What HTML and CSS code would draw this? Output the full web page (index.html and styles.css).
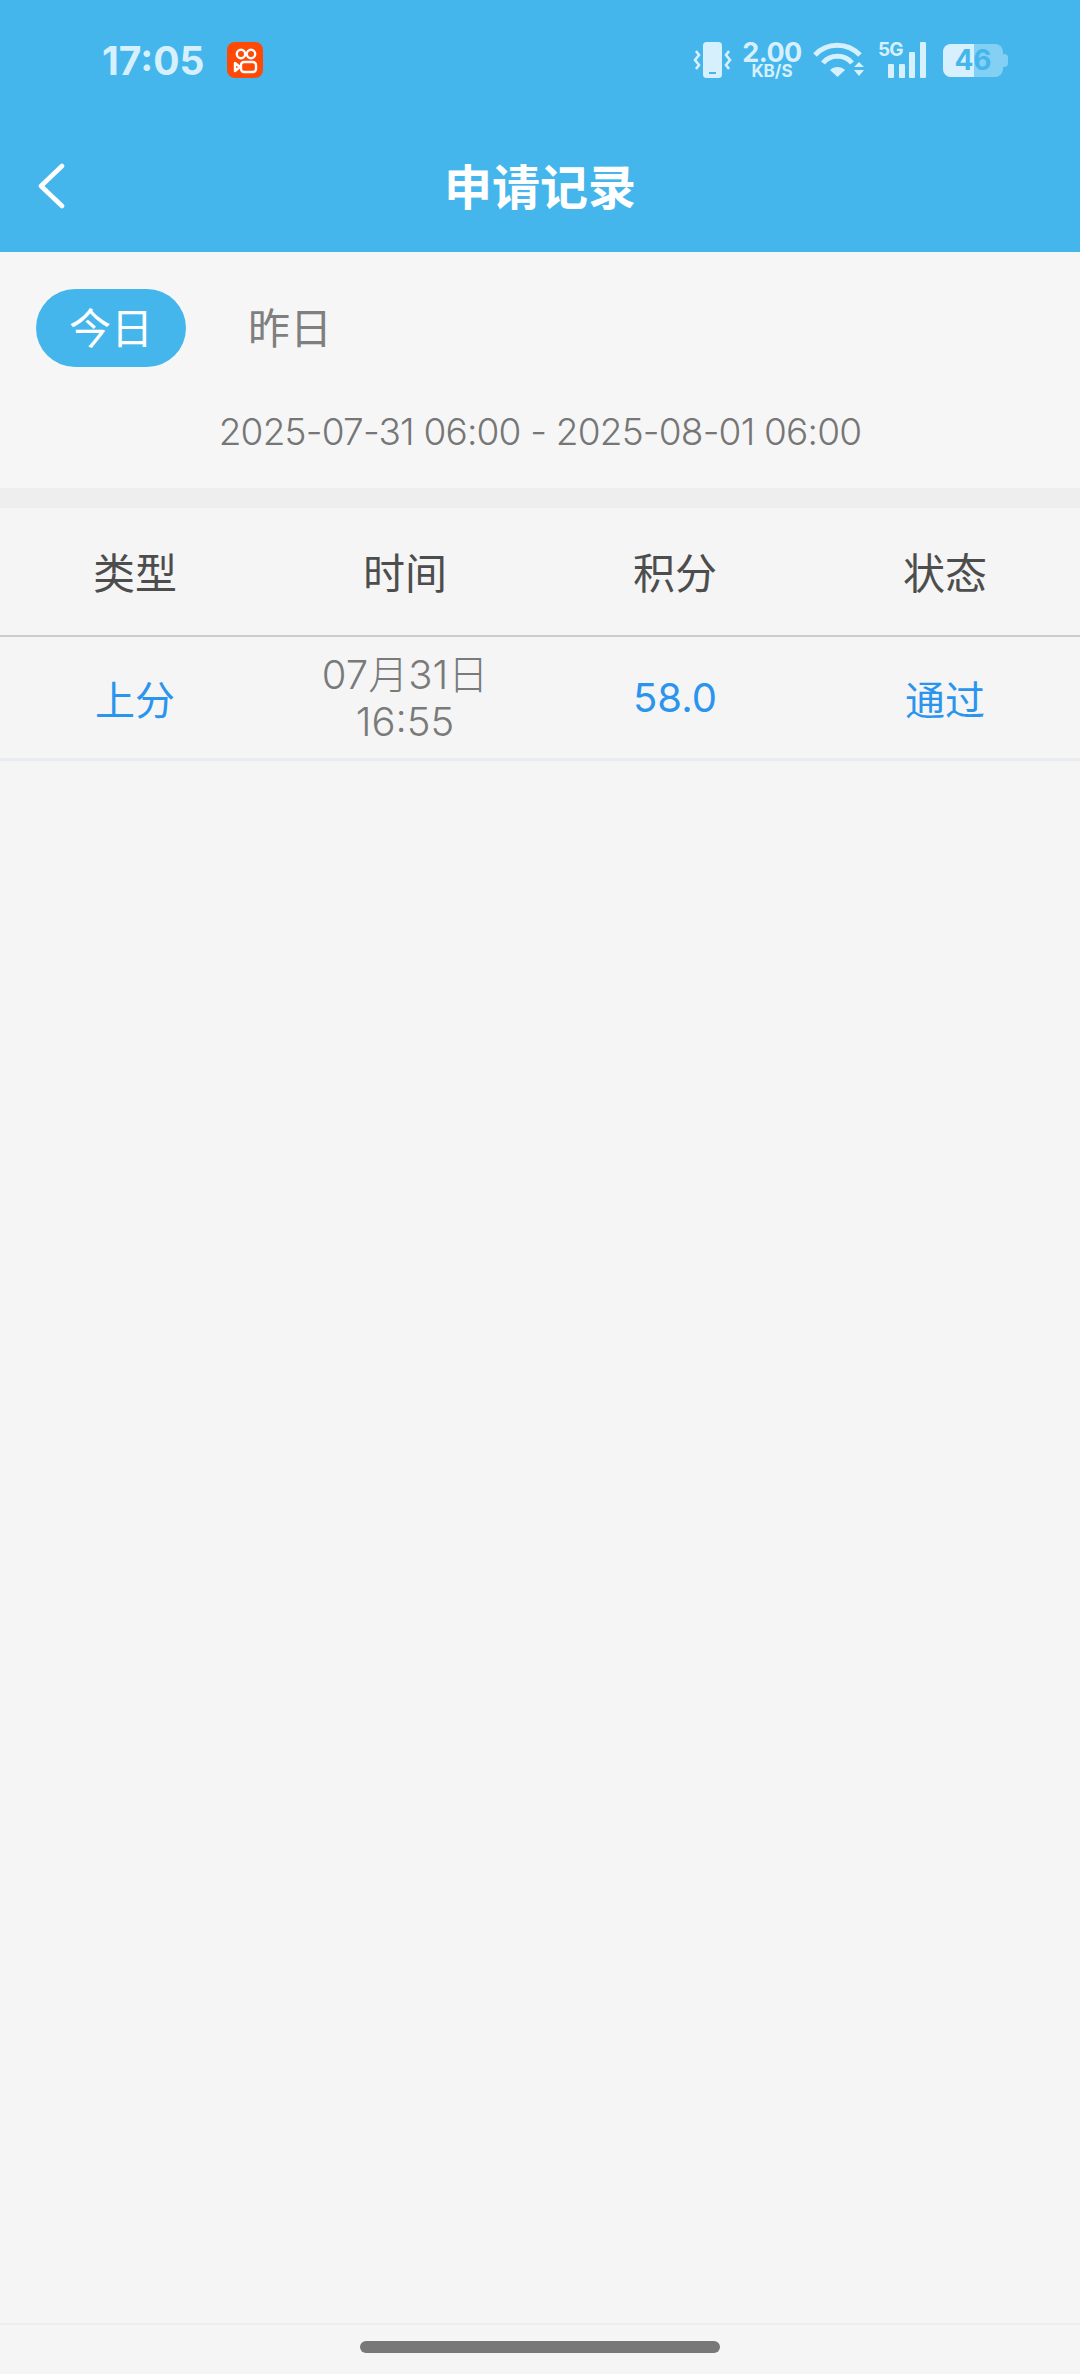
FILE: index.html
```html
<!DOCTYPE html>
<html lang="zh-CN">
<head>
  <meta charset="UTF-8" />
  <meta name="viewport" content="width=device-width, initial-scale=1.0"/>
  <title>申请记录</title>
  <link rel="stylesheet" href="styles.css">
</head>
<body>
  <div class="app">
    <header class="top">
      <div class="status">
        <span class="clock">17:05</span>
        <svg class="ks" width="36" height="36" viewBox="0 0 36 36">
          <rect width="36" height="36" rx="8" fill="#ff4906"/>
          <g fill="none" stroke="#fff" stroke-width="2.4">
            <circle cx="14" cy="12" r="4.2"/>
            <circle cx="24" cy="12" r="4.2"/>
            <rect x="14" y="20" width="15" height="10" rx="3"/>
            <path d="M8 21 L13 25 L8 29 Z" stroke-linejoin="round"/>
          </g>
        </svg>
        <div class="sys">
          <svg class="vib" width="40" height="36" viewBox="0 0 40 36">
            <rect x="10" y="0" width="19" height="36" rx="3.5" fill="#d6f0fd"/>
            <rect x="16" y="30" width="7" height="2" fill="#44b6ec"/>
            <path d="M3 9 L6 13 L2 18 L6 23 L3 27" fill="none" stroke="#d6f0fd" stroke-width="2.6"/>
            <path d="M36 9 L33 13 L37 18 L33 23 L36 27" fill="none" stroke="#d6f0fd" stroke-width="2.6"/>
          </svg>
          <div class="speed">
            <span class="speed-num">2.00</span>
            <span class="speed-unit">KB/S</span>
          </div>
          <svg class="wifi" width="52" height="36" viewBox="0 0 52 36">
            <g fill="none" stroke="#d6f0fd" stroke-width="5">
              <path d="M2 13 C14 0 34 0 47 13"/>
              <path d="M10 21 C17 12 32 12 39 21"/>
            </g>
            <path d="M17 28 C21 24 28 24 32 28 L24.5 35 Z" fill="#d6f0fd"/>
            <path d="M41 25 L46 20 L51 25 Z M41 28 L51 28 L46 34 Z" fill="#d6f0fd"/>
          </svg>
          <div class="signal">
            <span class="net">5G</span>
            <span class="bar b1"></span>
            <span class="bar b2"></span>
            <span class="bar b3"></span>
            <span class="bar b4"></span>
          </div>
          <div class="battery">
            <span class="batt-fill"></span>
            <span class="batt-num">46</span>
          </div>
        </div>
      </div>
      <div class="nav">
        <svg class="back" width="28" height="46" viewBox="0 0 28 46">
          <path d="M25 3 L4 23 L25 43" fill="none" stroke="#fff" stroke-width="4.6" stroke-linecap="round" stroke-linejoin="round"/>
        </svg>
        <h1>申请记录</h1>
      </div>
    </header>

    <section class="filter">
      <div class="tabs">
        <span class="tab active">今日</span>
        <span class="tab">昨日</span>
      </div>
      <p class="range">2025-07-31 06:00 - 2025-08-01 06:00</p>
    </section>
    <div class="band"></div>

    <div class="row head">
      <span>类型</span>
      <span>时间</span>
      <span>积分</span>
      <span>状态</span>
    </div>
    <div class="row item">
      <span class="blue">上分</span>
      <span class="when">07月31日<br>16:55</span>
      <span class="blue">58.0</span>
      <span class="blue">通过</span>
    </div>

    <div class="spacer"></div>
    <footer class="home"><span class="pill"></span></footer>
  </div>
</body>
</html>
```
FILE: styles.css
```css
* {
  box-sizing: border-box;
}
html, body {
  margin: 0;
  padding: 0;
}
body {
  font-family: Inter, "Noto Sans CJK SC", sans-serif;
  background: #f5f5f5;
}
.app {
  display: flex;
  flex-direction: column;
  height: 2374px;
}
.top {
  height: 252px;
  background: #44b6ec;
  flex: none;
}
.status {
  display: flex;
  align-items: center;
  height: 120px;
  padding: 0 72px 0 102px;
}
.clock {
  font-size: 39px;
  font-weight: 700;
  color: #d6f0fd;
  width: 125px;
}
.sys {
  margin-left: auto;
  display: flex;
  align-items: center;
}
.vib {
  margin-right: 10px;
}
.speed {
  display: flex;
  flex-direction: column;
  align-items: center;
  width: 58px;
  color: #d6f0fd;
  font-weight: 700;
}
.speed-num {
  font-size: 27px;
  line-height: 23px;
  letter-spacing: -0.5px;
}
.speed-unit {
  font-size: 17px;
  line-height: 15px;
}
.wifi {
  margin-left: 12px;
}
.signal {
  position: relative;
  display: flex;
  align-items: flex-end;
  gap: 4.5px;
  height: 36px;
  width: 48px;
  margin-left: 13px;
  padding-left: 10px;
}
.net {
  position: absolute;
  left: 0;
  top: -1px;
  font-size: 19px;
  line-height: 18px;
  font-weight: 700;
  letter-spacing: -1px;
  color: #d6f0fd;
}
.bar {
  width: 6px;
  background: #d6f0fd;
  border-radius: 1px;
}
.b1 { height: 14px; }
.b2 { height: 14px; }
.b3 { height: 26px; }
.b4 { height: 36px; }
.battery {
  position: relative;
  width: 60px;
  height: 33px;
  margin-left: 17px;
  margin-right: 5px;
  background: #84d0f4;
  border-radius: 8px;
  text-align: center;
}
.battery::after {
  content: "";
  position: absolute;
  right: -5px;
  top: 10px;
  width: 5px;
  height: 13px;
  background: #84d0f4;
  border-radius: 0 4px 4px 0;
}
.batt-fill {
  position: absolute;
  left: 0;
  top: 0;
  bottom: 0;
  width: 31px;
  background: #d6f0fd;
  border-radius: 8px 0 0 8px;
}
.batt-num {
  position: relative;
  font-size: 28px;
  line-height: 33px;
  font-weight: 700;
  color: #44b6ec;
}
.nav {
  position: relative;
  height: 132px;
  display: flex;
  align-items: center;
  justify-content: center;
}
.nav h1 {
  margin: 0 0 5px;
  font-size: 48px;
  font-weight: 700;
  color: #fff;
}
.back {
  position: absolute;
  left: 37px;
  top: 43px;
}
.filter {
  height: 236px;
  flex: none;
  background: #f6f6f6;
  padding: 37px 36px 0;
}
.tabs {
  display: flex;
}
.tab {
  width: 150px;
  height: 78px;
  border-radius: 39px;
  text-align: center;
  font-size: 42px;
  line-height: 80px;
  color: #7f7f7f;
  margin-right: 29px;
}
.tab.active {
  background: #44b6ec;
  color: #fff;
}
.range {
  margin: 39px 0 0;
  text-align: center;
  font-size: 37px;
  font-weight: 300;
  letter-spacing: -0.8px;
  line-height: 52px;
  color: #767676;
}
.band {
  height: 20px;
  flex: none;
  background: #eeeeee;
}
.row {
  display: grid;
  grid-template-columns: repeat(4, 1fr);
  align-items: center;
  text-align: center;
}
.head {
  height: 129px;
  padding-bottom: 3px;
  border-bottom: 2px solid #cccccc;
  font-size: 42px;
  color: #4d4d4d;
}
.item {
  height: 124px;
  border-bottom: 3px solid #e8ebf0;
  font-size: 40px;
}
.blue {
  color: #2b95ee;
}
.when {
  color: #7a7a7a;
  font-size: 40px;
  font-weight: 300;
  line-height: 47px;
  padding-top: 1px;
}
.spacer {
  flex: 1;
}
.home {
  height: 51px;
  flex: none;
  border-top: 2px solid #eeeeee;
  display: flex;
  justify-content: center;
  padding-top: 16px;
}
.pill {
  width: 360px;
  height: 12px;
  border-radius: 6px;
  background: #787878;
}
```
